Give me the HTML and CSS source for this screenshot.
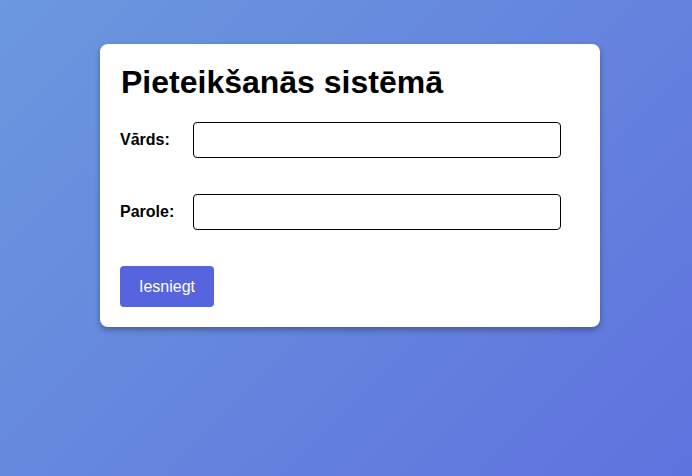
FILE: index.html
```html
<!DOCTYPE html>
<html lang="lv">
<head>
<meta charset="utf-8">
<title>Pieteikšanās sistēmā</title>
<link rel="stylesheet" href="styles.css">
</head>
<body>
<div class="card">
  <h1 class="title">Pieteikšanās sistēmā</h1>
  <form class="form">
    <div class="row">
      <label class="label" for="user">Vārds:</label>
      <input class="input" id="user" type="text">
    </div>
    <div class="row">
      <label class="label" for="pass">Parole:</label>
      <input class="input" id="pass" type="password">
    </div>
    <button class="btn" type="button">Iesniegt</button>
  </form>
</div>
</body>
</html>
```
FILE: styles.css
```css
html, body {
  margin: 0;
  height: 100%;
}
body {
  font-family: "Liberation Sans", Arial, sans-serif;
  background: linear-gradient(135deg, #6b98de 0%, #5f73de 100%);
  padding: 44px 0 0 100px;
  box-sizing: border-box;
}
.card {
  width: 500px;
  background: #fff;
  border-radius: 8px;
  box-shadow: 0 3px 6px rgba(0, 0, 0, 0.3);
  padding: 20px;
  box-sizing: border-box;
}
.title {
  font-size: 32px;
  font-weight: bold;
  margin: 0 0 21px 1px;
  color: #000;
}
.form {
  display: flex;
  flex-direction: column;
  gap: 36px;
  align-items: flex-start;
}
.row {
  display: flex;
  align-items: center;
  width: 100%;
}
.label {
  width: 73px;
  font-size: 16px;
  font-weight: bold;
  color: #000;
}
.input {
  width: 368px;
  height: 36px;
  box-sizing: border-box;
  border: 1px solid #000;
  border-radius: 4px;
  padding: 0 8px;
  font-size: 16px;
}
.btn {
  width: 94px;
  height: 41px;
  border: 0;
  border-radius: 4px;
  background: #5664de;
  color: #fff;
  font-family: "Liberation Sans", Arial, sans-serif;
  font-size: 16px;
}
```
